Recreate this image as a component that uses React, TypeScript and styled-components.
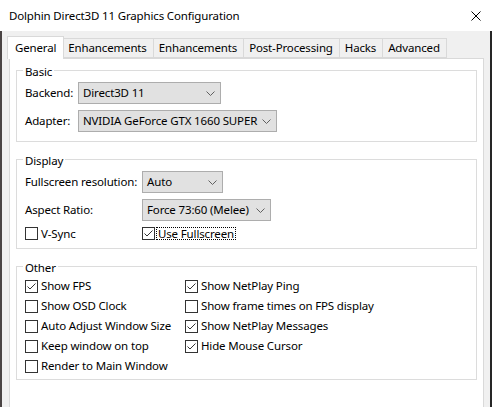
import React from "react";
import styled, { createGlobalStyle } from "styled-components";

const Global = createGlobalStyle`
  html, body { margin: 0; padding: 0; background: #ffffff; }
  body {
    font-family: "Noto Sans", "Open Sans", sans-serif;
    font-size: 11.5px;
    letter-spacing: -0.15px;
    color: #000000;
  }
  * { box-sizing: border-box; }
`;

const Window = styled.div`
  width: 492px;
  height: 407px;
  overflow: hidden;
  display: flex;
  flex-direction: column;
  background: #ffffff;
`;

const TitleBar = styled.div`
  flex: none;
  height: 31px;
  display: flex;
  align-items: center;
  justify-content: space-between;
  padding: 0 11px 0 9px;
  background: #ffffff;
`;

const TitleText = styled.span`
  line-height: 16px;
  white-space: nowrap;
`;

const CloseIcon = styled.svg`
  width: 10px;
  height: 10px;
  display: block;
`;

const Body = styled.div`
  flex: 1;
  min-height: 0;
  display: flex;
  flex-direction: column;
  background: #f0f0f0;
  border-left: 2px solid #4a4444;
  border-right: 2px solid #262626;
  padding: 5px 6px 0 7px;
`;

const TabBar = styled.div`
  flex: none;
  height: 22px;
  display: flex;
  align-items: flex-end;
`;

const Tab = styled.div<{ $active?: boolean }>`
  height: ${(p) => (p.$active ? 23 : 20)}px;
  margin: ${(p) => (p.$active ? "0 -2px -1px -2px" : "0")};
  padding: ${(p) => (p.$active ? "0 7px" : "0 6px 0 5px")};
  display: flex;
  align-items: center;
  background: ${(p) => (p.$active ? "#ffffff" : "#f0f0f0")};
  border: 1px solid #d9d9d9;
  border-bottom: ${(p) => (p.$active ? "none" : "1px solid #d9d9d9")};
  border-left-width: ${(p) => (p.$active ? "1px" : "0")};
  position: ${(p) => (p.$active ? "relative" : "static")};
  z-index: ${(p) => (p.$active ? 2 : "auto")};
  white-space: nowrap;
  line-height: 16px;
  &:nth-child(2) { border-left-width: 1px; }
`;

const Pane = styled.div`
  flex: 1;
  min-height: 0;
  display: flex;
  flex-direction: column;
  gap: 17px;
  background: #ffffff;
  border: 1px solid #d9d9d9;
  border-bottom: none;
  padding: 11px 6px 0 6px;
`;

const Group = styled.section<{ $pb: number }>`
  border: 1px solid #dcdcdc;
  padding: 0 8px ${(p) => p.$pb}px 8px;
  display: flex;
  flex-direction: column;
`;

const GroupTitle = styled.div`
  align-self: flex-start;
  margin: -7px 0 0 -2px;
  padding: 0 2px;
  background: #ffffff;
  line-height: 16px;
  white-space: nowrap;
`;

const FormGrid = styled.div<{ $col: number; $pt: number }>`
  display: grid;
  grid-template-columns: ${(p) => p.$col}px auto;
  justify-items: start;
  align-items: center;
  row-gap: 6px;
  padding-top: ${(p) => p.$pt}px;
`;

const Label = styled.span`
  line-height: 16px;
  white-space: nowrap;
`;

const Combo = styled.div<{ $w: number }>`
  width: ${(p) => p.$w}px;
  height: 22px;
  display: flex;
  align-items: center;
  justify-content: space-between;
  background: #e1e1e1;
  border: 1px solid #adadad;
  padding: 0 5px 0 4px;
  white-space: nowrap;
  line-height: 16px;
`;

const Chevron = styled.svg`
  width: 9px;
  height: 5px;
  flex: none;
  display: block;
`;

const CheckGrid = styled.div<{ $col: number }>`
  display: grid;
  grid-template-columns: ${(p) => p.$col}px auto;
  grid-auto-rows: 20px;
  align-items: center;
  justify-items: start;
`;

const CheckRow = styled.label<{ $h?: number }>`
  display: flex;
  align-items: center;
  gap: 3px;
  height: ${(p) => p.$h ?? 20}px;
  white-space: nowrap;
  line-height: 16px;
`;

const Box = styled.span`
  width: 13px;
  height: 13px;
  flex: none;
  display: flex;
  background: #ffffff;
  border: 1px solid #333333;
`;

const FocusText = styled.span`
  margin-left: -2px;
  padding: 0 1px;
  height: 13px;
  line-height: 11px;
  display: flex;
  align-items: center;
  border: 1px dotted #000000;
`;

const ChevronIcon = () => (
  <Chevron viewBox="0 0 9 5">
    <polyline points="0.5,0.5 4.5,4.5 8.5,0.5" fill="none" stroke="#606060" strokeWidth="1" />
  </Chevron>
);

const ComboBox = ({ w, value }: { w: number; value: string }) => (
  <Combo $w={w}>
    <span>{value}</span>
    <ChevronIcon />
  </Combo>
);

const CheckBox = ({
  checked,
  label,
  focused,
  h,
}: {
  checked?: boolean;
  label: string;
  focused?: boolean;
  h?: number;
}) => (
  <CheckRow $h={h}>
    <Box>
      {checked && (
        <svg width="11" height="11" viewBox="0 0 11 11">
          <polyline points="1.5,5.5 4,8 9.5,2.5" fill="none" stroke="#333333" strokeWidth="1" />
        </svg>
      )}
    </Box>
    {focused ? <FocusText>{label}</FocusText> : <span>{label}</span>}
  </CheckRow>
);

const tabs = ["General", "Enhancements", "Enhancements", "Post-Processing", "Hacks", "Advanced"];

export default function App() {
  return (
    <>
      <Global />
      <Window>
        <TitleBar>
          <TitleText>Dolphin Direct3D 11 Graphics Configuration</TitleText>
          <CloseIcon viewBox="0 0 10 10">
            <path d="M0.5 0.5 L9.5 9.5 M9.5 0.5 L0.5 9.5" stroke="#000" strokeWidth="1" fill="none" />
          </CloseIcon>
        </TitleBar>
        <Body>
          <TabBar>
            {tabs.map((t, i) => (
              <Tab key={i} $active={i === 0}>
                {t}
              </Tab>
            ))}
          </TabBar>
          <Pane>
            <Group $pb={9}>
              <GroupTitle>Basic</GroupTitle>
              <FormGrid $col={53} $pt={2}>
                <Label>Backend:</Label>
                <ComboBox w={143} value="Direct3D 11" />
                <Label>Adapter:</Label>
                <ComboBox w={199} value="NVIDIA GeForce GTX 1660 SUPER" />
              </FormGrid>
            </Group>
            <Group $pb={8}>
              <GroupTitle>Display</GroupTitle>
              <FormGrid $col={117} $pt={2}>
                <Label>Fullscreen resolution:</Label>
                <ComboBox w={81} value="Auto" />
                <Label>Aspect Ratio:</Label>
                <ComboBox w={129} value="Force 73:60 (Melee)" />
                <CheckBox label="V-Sync" h={13} />
                <CheckBox label="Use Fullscreen" checked focused h={13} />
              </FormGrid>
            </Group>
            <Group $pb={3}>
              <GroupTitle>Other</GroupTitle>
              <CheckGrid $col={160}>
                <CheckBox label="Show FPS" checked />
                <CheckBox label="Show NetPlay Ping" checked />
                <CheckBox label="Show OSD Clock" />
                <CheckBox label="Show frame times on FPS display" />
                <CheckBox label="Auto Adjust Window Size" />
                <CheckBox label="Show NetPlay Messages" checked />
                <CheckBox label="Keep window on top" />
                <CheckBox label="Hide Mouse Cursor" checked />
                <CheckBox label="Render to Main Window" />
              </CheckGrid>
            </Group>
          </Pane>
        </Body>
      </Window>
    </>
  );
}
